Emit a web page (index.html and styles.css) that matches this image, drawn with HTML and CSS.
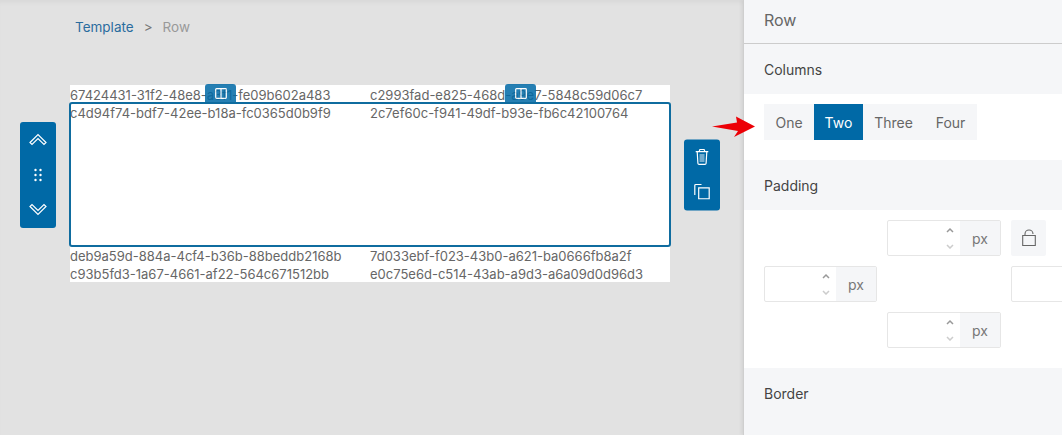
FILE: index.html
```html
<!DOCTYPE html>
<html lang="en">
<head>
  <meta charset="UTF-8" />
  <title>Row</title>
  <link rel="stylesheet" href="styles.css">
</head>
<body>
  <div class="canvas">
    <div class="breadcrumb">
      <a class="crumb-link">Template</a>
      <span class="crumb-sep">&gt;</span>
      <span class="crumb-current">Row</span>
    </div>

    <div class="stage">
      <div class="row">
        <div class="cell">67424431-31f2-48e8-a3f1-fe09b602a483
          <span class="col-badge">
            <svg width="12" height="11" viewBox="0 0 12 11"><path d="M1.500.7h9a.8.8 0 0 1 .8.8v8a.8.8 0 0 1-.8.8h-9a.8.8 0 0 1-.8-.8v-8a.8.8 0 0 1 .8-.8zM6 .7v9.600" /></svg>
          </span>
        </div>
        <div class="cell">c2993fad-e825-468d-a9e7-5848c59d06c7
          <span class="col-badge">
            <svg width="12" height="11" viewBox="0 0 12 11"><path d="M1.500.7h9a.8.8 0 0 1 .8.8v8a.8.8 0 0 1-.8.8h-9a.8.8 0 0 1-.8-.8v-8a.8.8 0 0 1 .8-.8zM6 .7v9.600" /></svg>
          </span>
        </div>
      </div>

      <div class="row row-selected">
        <div class="cell">c4d94f74-bdf7-42ee-b18a-fc0365d0b9f9</div>
        <div class="cell">2c7ef60c-f941-49df-b93e-fb6c42100764</div>
        <div class="select-frame"></div>

        <div class="toolbar toolbar-left">
          <button class="tool-btn">
            <svg width="18" height="13" viewBox="0 0 18 13"><path d="M1 9.500 9 1.500l8 8-2 2-6-6-6 6z" /></svg>
          </button>
          <button class="tool-btn">
            <svg class="dots" width="8" height="14" viewBox="0 0 8 14"><circle cx="1.500" cy="2" r="1.200" /><circle cx="6.500" cy="2" r="1.200" /><circle cx="1.500" cy="7" r="1.200" /><circle cx="6.500" cy="7" r="1.200" /><circle cx="1.500" cy="12" r="1.200" /><circle cx="6.500" cy="12" r="1.200" /></svg>
          </button>
          <button class="tool-btn">
            <svg width="18" height="13" viewBox="0 0 18 13"><path d="M1 3.500 9 11.500l8-8-2-2-6 6-6-6z" /></svg>
          </button>
        </div>

        <div class="toolbar toolbar-right">
          <button class="tool-btn">
            <svg width="14" height="17" viewBox="0 0 14 17"><path d="M.7 3.200h12.600M4.500 3.200V1.800a.8.8 0 0 1 .8-.8h3.400a.8.8 0 0 1 .8.8v1.400M2.200 3.200l.7 11.600a1.200 1.200 0 0 0 1.200 1.100h5.800a1.200 1.200 0 0 0 1.200-1.100l.7-11.600" /><rect class="trash-fill" x="4.500" y="5.500" width="5" height="8" /></svg>
          </button>
          <button class="tool-btn">
            <svg width="16" height="16" viewBox="0 0 16 16"><path d="M7.500 1H1.800a1 1 0 0 0-1 1v9.500M4.700 4.300h10.500v11H4.700z" /></svg>
          </button>
        </div>
      </div>

      <div class="row">
        <div class="cell">deb9a59d-884a-4cf4-b36b-88beddb2168b</div>
        <div class="cell">7d033ebf-f023-43b0-a621-ba0666fb8a2f</div>
      </div>
      <div class="row">
        <div class="cell">c93b5fd3-1a67-4661-af22-564c671512bb</div>
        <div class="cell">e0c75e6d-c514-43ab-a9d3-a6a09d0d96d3</div>
      </div>
    </div>

    <svg class="red-arrow" width="44" height="22" viewBox="0 0 44 22"><path d="M0 10.500 25 6.500 24 .5 43 10.500 22 21 26 15z" /></svg>
  </div>

  <div class="panel">
    <div class="panel-title">Row</div>

    <div class="section-head">Columns</div>
    <div class="section-body section-columns">
      <div class="btn-group">
        <button class="seg-btn seg-one">One</button>
        <button class="seg-btn seg-two active">Two</button>
        <button class="seg-btn seg-three">Three</button>
        <button class="seg-btn seg-four">Four</button>
      </div>
    </div>

    <div class="section-head">Padding</div>
    <div class="section-body section-padding">
      <div class="padding-grid">
        <div class="num-input slot-top">
          <span class="num-value"></span>
          <span class="spin"><svg width="10" height="22" viewBox="0 0 10 22"><path class="spin-up" d="M2 5l3-3 3 3" /><path class="spin-down" d="M2 18l3 3 3-3" /></svg></span>
          <span class="unit">px</span>
        </div>
        <button class="lock-btn slot-lock">
          <svg width="14" height="18" viewBox="0 0 14 18"><path d="M.7 6.500h12.600v10H.7zM3 6.500V5a4 4 0 0 1 8 0" /></svg>
        </button>
        <div class="num-input slot-left">
          <span class="num-value"></span>
          <span class="spin"><svg width="10" height="22" viewBox="0 0 10 22"><path class="spin-up" d="M2 5l3-3 3 3" /><path class="spin-down" d="M2 18l3 3 3-3" /></svg></span>
          <span class="unit">px</span>
        </div>
        <div class="num-input slot-right">
          <span class="num-value"></span>
          <span class="spin"><svg width="10" height="22" viewBox="0 0 10 22"><path class="spin-up" d="M2 5l3-3 3 3" /><path class="spin-down" d="M2 18l3 3 3-3" /></svg></span>
          <span class="unit">px</span>
        </div>
        <div class="num-input slot-bottom">
          <span class="num-value"></span>
          <span class="spin"><svg width="10" height="22" viewBox="0 0 10 22"><path class="spin-up" d="M2 5l3-3 3 3" /><path class="spin-down" d="M2 18l3 3 3-3" /></svg></span>
          <span class="unit">px</span>
        </div>
      </div>
    </div>

    <div class="section-head">Border</div>
  </div>
</body>
</html>
```

FILE: styles.css
```css
* {
  box-sizing: border-box;
}
html,
body {
  height: 100%;
}
body {
  font-family: Inter, "Liberation Sans", sans-serif;
  margin: 0;
  display: flex;
  overflow: hidden;
  background: #e2e2e2;
  color: #666;
}
button {
  font-family: inherit;
  border: none;
  padding: 0;
  cursor: pointer;
}

/* left side */
.canvas {
  position: relative;
  width: 743px;
  flex: none;
  padding: 18px 0 0 70px;
  background: #e2e2e2;
  box-shadow: inset 0 5px 5px -3px rgba(0,0,0,0.05);
}
.breadcrumb {
  display: flex;
  gap: 10px;
  padding-left: 5px;
  font-size: 13.500px;
  line-height: 18px;
  margin-bottom: 49px;
}
.crumb-link {
  color: #2a6c9e;
}
.crumb-sep {
  color: #777;
}
.crumb-current {
  color: #999;
}
.stage {
  width: 600px;
  background: #fff;
}
.row {
  display: grid;
  grid-template-columns: 300px 300px;
  font-size: 13px;
  line-height: 18px;
  color: #666;
}
.cell {
  position: relative;
  height: 18px;
  padding-top: 1px;
}
.row-selected {
  position: relative;
  height: 143px;
}
.select-frame {
  position: absolute;
  inset: -1px;
  border: 2px solid #0f6c9f;
  border-radius: 3px;
  pointer-events: none;
}
.col-badge {
  position: absolute;
  left: 135px;
  top: -1px;
  width: 31px;
  height: 19px;
  display: flex;
  align-items: center;
  justify-content: center;
  background: #0069a6;
  opacity: 0.85;
  border-radius: 3px 3px 0 0;
}
.col-badge svg,
.tool-btn svg {
  fill: none;
  stroke: #fff;
  stroke-width: 1.200;
}
.toolbar {
  position: absolute;
  top: 50%;
  transform: translateY(-50%);
  width: 36px;
  display: flex;
  flex-direction: column;
  align-items: center;
  background: #0069a6;
  border-radius: 3px;
}
.toolbar-left {
  left: -50px;
  height: 106px;
  padding: 1px 0;
}
.toolbar-right {
  right: -50px;
  height: 71px;
  padding: 1px 0;
}
.tool-btn {
  flex: 1;
  width: 100%;
  display: flex;
  align-items: center;
  justify-content: center;
  background: none;
}
.tool-btn .dots {
  stroke: none;
  fill: #fff;
}
.tool-btn .trash-fill {
  fill: rgba(255,255,255,0.45);
  stroke: none;
}
.red-arrow {
  position: absolute;
  z-index: 2;
  left: 712px;
  top: 116px;
  fill: #ec0006;
}

/* right panel */
.panel {
  position: relative;
  flex: 1;
  min-width: 0;
  overflow: hidden;
  background: #f5f6f8;
  border-left: 1px solid #cfcfcf;
  box-shadow: -2px 0 3px rgba(0,0,0,0.06);
}
.panel-title {
  height: 44px;
  padding-left: 20px;
  font-size: 16px;
  line-height: 41px;
  color: #666;
  border-bottom: 1px solid #ccc;
}
.section-head {
  height: 50px;
  padding-left: 20px;
  font-size: 14px;
  line-height: 52px;
  color: #444;
}
.section-body {
  background: #fff;
  padding: 10px 20px;
}
.section-columns {
  height: 66px;
}
.section-padding {
  height: 158px;
}
.btn-group {
  display: inline-flex;
  height: 36px;
  background: #f5f6f8;
}
.seg-btn {
  height: 36px;
  font-size: 14px;
  color: #666;
  background: none;
}
.seg-one {
  width: 50px;
}
.seg-two {
  width: 49px;
}
.seg-three {
  width: 61px;
}
.seg-four {
  width: 53px;
}
.seg-btn.active {
  background: #0069a6;
  color: #fff;
}
.padding-grid {
  display: grid;
  grid-template-columns: 113px 114px 114px;
  grid-auto-rows: 36px;
  column-gap: 10px;
  row-gap: 10px;
}
.slot-top {
  grid-column: 2;
  grid-row: 1;
}
.slot-lock {
  grid-column: 3;
  grid-row: 1;
}
.slot-left {
  grid-column: 1;
  grid-row: 2;
}
.slot-right {
  grid-column: 3;
  grid-row: 2;
}
.slot-bottom {
  grid-column: 2;
  grid-row: 3;
}
.num-input {
  display: flex;
  align-items: center;
  height: 36px;
  background: #fff;
  border: 1px solid #e6e6e6;
  border-radius: 2px;
}
.num-value {
  flex: 1;
}
.spin {
  display: flex;
  width: 10px;
  margin-right: 5px;
}
.spin svg {
  fill: none;
  stroke-width: 1.500;
}
.spin-up {
  stroke: #999;
}
.spin-down {
  stroke: #ccc;
}
.unit {
  width: 40px;
  height: 100%;
  display: flex;
  align-items: center;
  justify-content: center;
  font-size: 14px;
  color: #777;
  background: #f5f6f8;
}
.lock-btn {
  width: 35px;
  height: 36px;
  display: flex;
  align-items: center;
  justify-content: center;
  background: #f5f6f8;
  border-radius: 2px;
}
.lock-btn svg {
  fill: none;
  stroke: #666;
  stroke-width: 1.100;
}
```
